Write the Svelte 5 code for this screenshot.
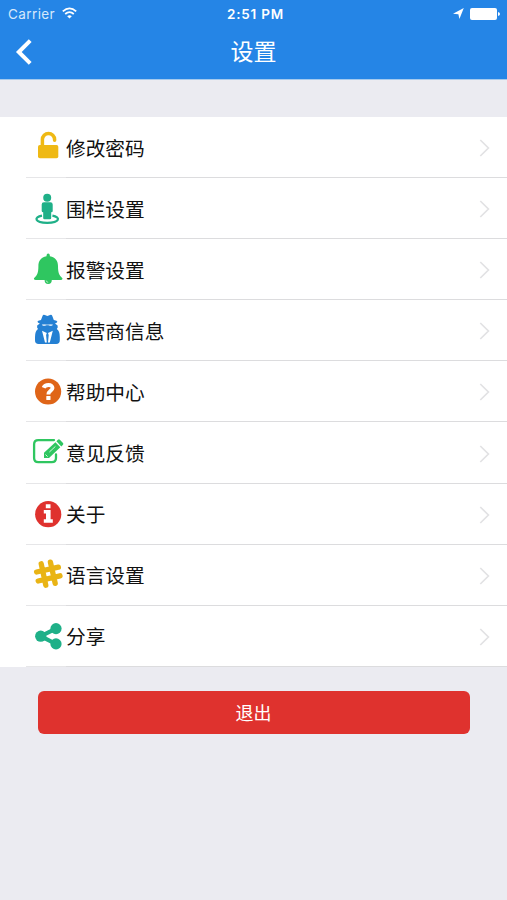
<script>
  const items = [
    { icon: "lock", title: "修改密码", color: "#efb914" },
    { icon: "fence", title: "围栏设置", color: "#1fb088" },
    { icon: "bell", title: "报警设置", color: "#2fc660" },
    { icon: "operator", title: "运营商信息", color: "#2480d3" },
    { icon: "help", title: "帮助中心", color: "#df6518" },
    { icon: "feedback", title: "意见反馈", color: "#2fc660" },
    { icon: "about", title: "关于", color: "#df322e" },
    { icon: "language", title: "语言设置", color: "#e9b415" },
    { icon: "share", title: "分享", color: "#1fb088" }
  ];
</script>

<style>
  :global(body) {
    background: #ebebf1;
  }

  .page {
    min-height: 900px;
    font-family: "Liberation Sans", "Noto Sans CJK SC", sans-serif;
    color: #111;
  }

  header {
    height: 80px;
    background: #2585e6;
    border-bottom: 1px solid #a5caee;
    box-sizing: border-box;
    color: #fff;
  }

  .status {
    display: grid;
    grid-template-columns: 1fr auto 1fr;
    height: 27px;
    padding: 0 7px 0 8px;
    align-items: center;
    font-family: Inter, sans-serif;
    font-size: 13.5px;
  }

  .carrier {
    display: flex;
    align-items: center;
    gap: 7px;
    color: #d5e8fb;
    letter-spacing: 0.4px;
  }

  .carrier svg {
    margin-top: -2px;
  }

  .time {
    padding-left: 3px;
    font-size: 13.5px;
    font-weight: 600;
    letter-spacing: 0.8px;
  }

  .battery {
    display: flex;
    align-items: center;
    justify-content: flex-end;
    gap: 6px;
  }

  .nav {
    display: grid;
    grid-template-columns: 1fr auto 1fr;
    align-items: center;
    height: 50px;
    padding: 0 15px;
  }

  .nav svg {
    display: block;
  }

  h1 {
    margin: 0;
    font-size: 23px;
    font-weight: 400;
    line-height: 50px;
  }

  .list {
    list-style: none;
    margin: 37px 0 0;
    padding: 0;
    background: #fff;
  }

  .item {
    display: flex;
    height: 61.1px;
    padding-left: 26px;
  }

  .icon {
    width: 40px;
    padding: 12px 0 0 6px;
    box-sizing: border-box;
    border-bottom: 1px solid #e6e6e8;
  }

  .icon svg {
    display: block;
  }

  .label {
    flex: 1;
    display: flex;
    align-items: center;
    justify-content: space-between;
    padding: 2px 17px 0 0;
    border-bottom: 1px solid #dcdcde;
    font-size: 19.7px;
  }

  .label span {
    padding-bottom: 2px;
  }

  .logout {
    display: block;
    width: 432px;
    height: 43px;
    margin: 24px 0 0 38px;
    padding: 0 1px 0 0;
    border: none;
    border-radius: 6px;
    background: #df322e;
    color: #fff;
    font-family: inherit;
    font-size: 18px;
  }
</style>

<div class="page">
  <header>
    <div class="status">
      <div class="carrier">
        <span>Carrier</span>
        <svg width="15" height="12" viewBox="0 0 15 12" fill="none" stroke="#fff" stroke-width="1.8">
          <path d="M0.8 4.4Q7.5 -1.6 14.2 4.4M3.2 7Q7.5 3.2 11.8 7" />
          <path d="M7.5 11.5L5.2 9.2Q7.5 7.2 9.8 9.2Z" fill="#fff" stroke="none" />
        </svg>
      </div>
      <div class="time">2:51 PM</div>
      <div class="battery">
        <svg width="11" height="11" viewBox="0 0 11 11">
          <path d="M0 5.8L10.8 0L6.4 10.9L5.4 6.2Z" fill="#fff" />
        </svg>
        <svg width="30" height="12" viewBox="0 0 30 12" fill="#fff">
          <rect width="27" height="12" rx="2" />
          <path d="M28 4Q30 4.5 30 6T28 8Z" />
        </svg>
      </div>
    </div>
    <div class="nav">
      <svg width="18" height="26" viewBox="0 0 18 26">
        <path d="M15.2 1.6L3.8 13L15.2 24.4" fill="none" stroke="#fff" stroke-width="4" />
      </svg>
      <h1>设置</h1>
      <span></span>
    </div>
  </header>

  <ul class="list">
    {#each items as item}
      <li class="item">
        <div class="icon">
          <svg width="32" height="36" viewBox="0 0 32 36" fill={item.color}>
            {#if item.icon === "lock"}
              <rect x="6" y="16" width="20.3" height="13.2" rx="1.8" />
              <path
                d="M10.4 17V10.5A6.1 6.1 0 0 1 22.6 10.5V11.3"
                fill="none"
                stroke={item.color}
                stroke-width="3.5"
                stroke-linecap="round" />
            {:else if item.icon === "fence"}
              <circle cx="15.2" cy="7.7" r="4" />
              <path d="M12 12.2H18.4Q20.7 12.2 20.7 14.5V21Q20.7 22.2 19.2 22.2V28Q19.2 29.2 18 29.2H12.4Q11.2 29.2 11.2 28V22.2Q9.7 22.2 9.7 21V14.5Q9.7 12.2 12 12.2Z" />
              <path
                d="M10 25.7C1.5 27.2 2.4 32.8 15.2 32.8S29 27.2 20.4 25.7"
                fill="none"
                stroke={item.color}
                stroke-width="2.2" />
            {:else if item.icon === "bell"}
              <path d="M16.2 2.6Q17.9 2.6 17.9 5.2C23.6 6.2 26 10 26 15C26 21.4 27 24.3 30.4 27.2Q30.8 29 28.5 29H19.8A3.6 3.9 0 0 1 12.6 29H3.9Q1.6 29 2 27.2C5.4 24.3 6.4 21.4 6.4 15C6.4 10 8.8 6.2 14.5 5.2Q14.5 2.6 16.2 2.6Z" />
              <path d="M14.2 29.5Q14.4 31.2 16.2 31.4" fill="none" stroke="#fff" stroke-width="0.6" />
            {:else if item.icon === "operator"}
              <path d="M9 8L10.6 3.8Q11.2 2.4 12.8 3.1L15.4 4L18 3.1Q19.6 2.4 20.2 3.8L21.8 8Q25.4 8.8 25.4 9.7Q25 11 23 11.4L25.6 13.4Q26.2 15.4 24.8 17Q27.8 19 27.8 25V28.2Q27.8 32 24.2 32H6.6Q3 32 3 28.2V25Q3 19 6 17Q4.6 15.4 5.2 13.4L7.8 11.4Q5.8 11 5.4 9.7Q5.4 8.8 9 8Z" />
              <path
                d="M9.8 12.4Q12.6 11.8 14.9 12.6H16Q18.2 11.8 21 12.4L20.4 13.5Q18 14.8 16.4 13.3H14.5Q12.8 14.8 10.4 13.5Z"
                fill="#fff"
                opacity="0.75" />
              <path d="M10 18.8L14.8 21L14.1 23L14.8 30.4H13ZM20.8 18.8L16 21L16.7 23L16 30.4H17.8Z" fill="#fff" />
            {:else if item.icon === "help"}
              <circle cx="16.1" cy="18.5" r="13.1" />
              <path
                d="M11.6 14.8C13.1 11 20.6 11 20.5 15C20.4 18 16.4 17.7 16.4 21.5"
                fill="none"
                stroke="#fff"
                stroke-width="3.9" />
              <rect x="14.3" y="23" width="4.2" height="4" rx="0.5" fill="#fff" />
            {:else if item.icon === "feedback"}
              <path
                d="M22 6.1H6.3Q2.1 6.1 2.1 10.3V23.9Q2.1 28.1 6.3 28.1H19.8Q24 28.1 24 23.9V20.5"
                fill="none"
                stroke={item.color}
                stroke-width="2.3"
                stroke-linecap="round" />
              <path d="M12 18.7L23.4 8.3L28.3 13.3L17 24H12ZM24.4 7.3L25.9 5.8Q27 4.9 28.1 5.9L31 8.9Q31.9 10 30.8 11.1L29.3 12.4Z" />
              <path d="M13.5 20.5L15.6 22.6M17.4 18L23.4 12.4" fill="none" stroke="#fff" stroke-width="0.8" />
            {:else if item.icon === "about"}
              <circle cx="16.2" cy="18.2" r="13.1" />
              <path d="M13.8 8.3H18.5V12.2H13.8ZM11.8 14H18.6V23.3H20.8V26.8H11.8V23.3H14V17.5H11.8Z" fill="#fff" />
            {:else if item.icon === "language"}
              <path
                d="M9.2 6.8L13.8 28.2M18.4 5.2L23.2 26.4M4.6 15L26.4 10.2M6.2 24L28 18.8"
                fill="none"
                stroke={item.color}
                stroke-width="5.3"
                stroke-linecap="round" />
            {:else}
              <path d="M24 10.6L8.7 18.2L24 26" fill="none" stroke={item.color} stroke-width="4.2" />
              <circle cx="8.7" cy="18.2" r="5.6" />
              <circle cx="24" cy="10.6" r="5.6" />
              <circle cx="24" cy="25.9" r="5.6" />
            {/if}
          </svg>
        </div>
        <div class="label">
          <span>{item.title}</span>
          <svg width="11" height="18" viewBox="0 0 11 18">
            <path d="M1.3 1L9.4 9L1.3 17" fill="none" stroke="#e2e2e4" stroke-width="1.7" />
          </svg>
        </div>
      </li>
    {/each}
  </ul>

  <button class="logout">退出</button>
</div>
